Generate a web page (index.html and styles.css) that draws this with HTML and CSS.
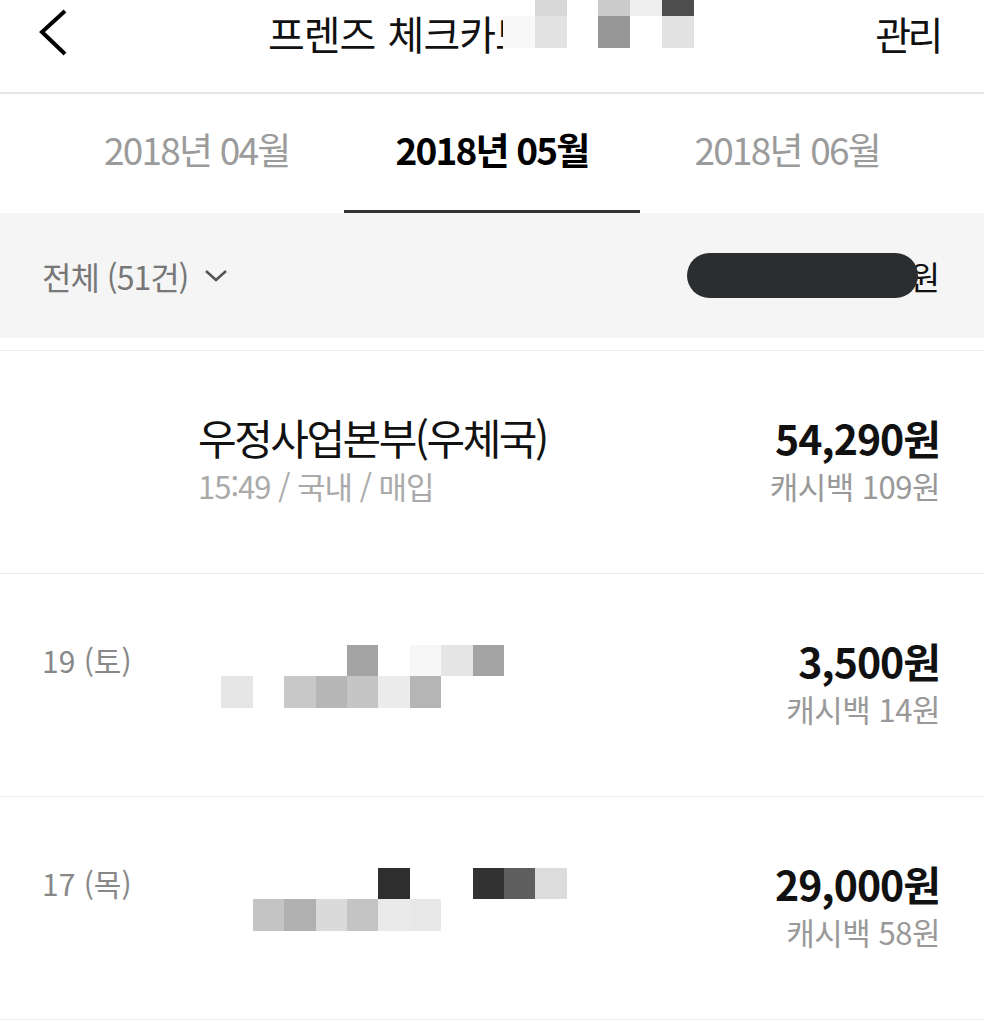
FILE: index.html
```html
<!DOCTYPE html>
<html lang="ko">
<head>
    <meta charset="UTF-8">
    <meta name="viewport" content="width=device-width, initial-scale=1.0">
    <title>프렌즈 체크카드</title>
    <link rel="stylesheet" href="styles.css">
</head>
<body>
    <header class="topbar">
        <svg class="back" width="40" height="50" viewBox="0 0 40 50">
            <polyline points="27,3 4,24 27,46" fill="none" stroke="#000" stroke-width="4"/>
        </svg>
        <h1 class="title">프렌즈 체크카드 내역</h1>
        <a class="manage">관리</a>
        <div class="mosaic mosaic-top">
            <i></i><i style="background:#d8d8d8"></i><i></i><i style="background:#cbcbcb"></i><i style="background:#efefef"></i><i style="background:#4d4d4d"></i>
            <i style="background:#f8f8f8"></i><i style="background:#e2e2e2"></i><i></i><i style="background:#979797"></i><i></i><i style="background:#e2e2e2"></i>
        </div>
    </header>

    <nav class="tabs">
        <a class="tab">2018년 04월</a>
        <a class="tab active">2018년 05월</a>
        <a class="tab">2018년 06월</a>
    </nav>

    <div class="filter">
        <div class="filter-select">
            전체 (51건)
            <svg width="24" height="14" viewBox="0 0 24 14">
                <polyline points="2,2 12,11 22,2" fill="none" stroke="#555" stroke-width="2.6"/>
            </svg>
        </div>
        <div class="total"><span class="mask"></span><span class="won">원</span></div>
    </div>

    <ul class="list">
        <li class="item">
            <div class="date"></div>
            <div class="info">
                <p class="name">우정사업본부(우체국)</p>
                <p class="meta">15:49 / 국내 / 매입</p>
            </div>
            <div class="price">
                <p class="amount">54,290원</p>
                <p class="cashback">캐시백 109원</p>
            </div>
        </li>
        <li class="item">
            <div class="date">19 (토)</div>
            <div class="info">
                <div class="mosaic mosaic-row">
                    <i></i><i></i><i></i><i></i><i></i><i style="background:#a4a4a4"></i><i></i><i style="background:#f7f7f7"></i><i style="background:#e5e5e5"></i><i style="background:#a3a3a3"></i><i></i><i></i>
                    <i></i><i style="background:#e6e6e6"></i><i></i><i style="background:#c8c8c8"></i><i style="background:#b6b6b6"></i><i style="background:#c5c5c5"></i><i style="background:#ececec"></i><i style="background:#b5b5b5"></i><i></i><i></i><i></i><i></i>
                </div>
            </div>
            <div class="price">
                <p class="amount">3,500원</p>
                <p class="cashback">캐시백 14원</p>
            </div>
        </li>
        <li class="item">
            <div class="date">17 (목)</div>
            <div class="info">
                <div class="mosaic mosaic-row">
                    <i></i><i></i><i></i><i></i><i></i><i></i><i style="background:#2e2e2e"></i><i></i><i></i><i style="background:#323232"></i><i style="background:#5e5e5e"></i><i style="background:#dcdcdc"></i>
                    <i></i><i></i><i style="background:#c4c4c4"></i><i style="background:#b0b0b0"></i><i style="background:#dadada"></i><i style="background:#c4c4c4"></i><i style="background:#eaeaea"></i><i style="background:#e8e8e8"></i><i></i><i></i><i></i><i></i>
                </div>
            </div>
            <div class="price">
                <p class="amount">29,000원</p>
                <p class="cashback">캐시백 58원</p>
            </div>
        </li>
    </ul>
</body>
</html>
```

FILE: styles.css
```css
body {
    margin: 0;
    font-family: "Noto Sans CJK KR", "Noto Sans", sans-serif;
    background-color: #ffffff;
    color: #111111;
    overflow: hidden;
}
p {
    margin: 0;
}
/* Barra superior */
.topbar {
    position: relative;
    border-bottom: 2px solid #e6e6e6;
    display: flex;
    align-items: center;
    padding: 0 44px 26px 38px;
    box-sizing: border-box;
    height: 94px;
    overflow: hidden;
}
.title {
    flex: 1;
    margin: 0 0 0 190px;
    font-size: 40px;
    font-weight: normal;
    letter-spacing: -1px;
    word-spacing: 2px;
    white-space: nowrap;
    overflow: hidden;
}
.manage {
    font-size: 39px;
    letter-spacing: -3.5px;
    color: #111111;
}
.mosaic {
    display: grid;
    grid-template-columns: repeat(12, 31.4px);
    grid-auto-rows: 31.4px;
}
.mosaic-top {
    position: absolute;
    left: 503px;
    top: -15px;
    grid-template-columns: repeat(6, 31.8px);
    padding-bottom: 10px;
    background-color: #ffffff;
}
.mosaic-row {
    margin: 9px 0 0 -8px;
}
/* Pestañas de meses */
.tabs {
    display: flex;
    padding: 0 49px;
    height: 119px;
}
.tab {
    flex: 1;
    display: flex;
    justify-content: center;
    align-items: center;
    padding-bottom: 10px;
    font-size: 37px;
    letter-spacing: -1.8px;
    color: #9b9b9b;
}
.tab.active {
    color: #000000;
    font-weight: bold;
    border-bottom: 3px solid #333333;
    padding-bottom: 7px;
}
/* Filtro */
.filter {
    height: 125px;
    background-color: #f5f5f5;
    display: flex;
    justify-content: space-between;
    align-items: center;
    padding: 0 44px 0 42px;
    margin-bottom: 12px;
}
.filter-select {
    font-size: 32px;
    letter-spacing: -1px;
    color: #777777;
    display: flex;
    align-items: center;
    gap: 16px;
}
.total {
    display: flex;
    align-items: center;
    font-size: 33px;
    color: #111111;
}
.mask {
    width: 231px;
    height: 45px;
    border-radius: 23px;
    background-color: #2a2e31;
    position: relative;
    z-index: 1;
}
.won {
    margin-left: -8px;
}
/* Lista */
.list {
    list-style: none;
    margin: 0;
    padding: 0;
    border-top: 1px solid #ebebeb;
}
.item {
    border-bottom: 1px solid #ebebeb;
    display: flex;
    padding: 62px 44px 0 42px;
    box-sizing: border-box;
    height: 223px;
}
.date {
    width: 156px;
    font-size: 30px;
    line-height: 48px;
    color: #888888;
}
.info {
    flex: 1;
}
.name {
    font-size: 42px;
    line-height: 48px;
    letter-spacing: -2.5px;
}
.meta {
    font-size: 31px;
    line-height: 50px;
    color: #aaaaaa;
    letter-spacing: -1px;
}
.price {
    text-align: right;
}
.amount {
    font-size: 41px;
    line-height: 48px;
    font-weight: bold;
    letter-spacing: -1px;
}
.cashback {
    font-size: 31px;
    line-height: 50px;
    color: #999999;
    letter-spacing: -0.5px;
}
```
